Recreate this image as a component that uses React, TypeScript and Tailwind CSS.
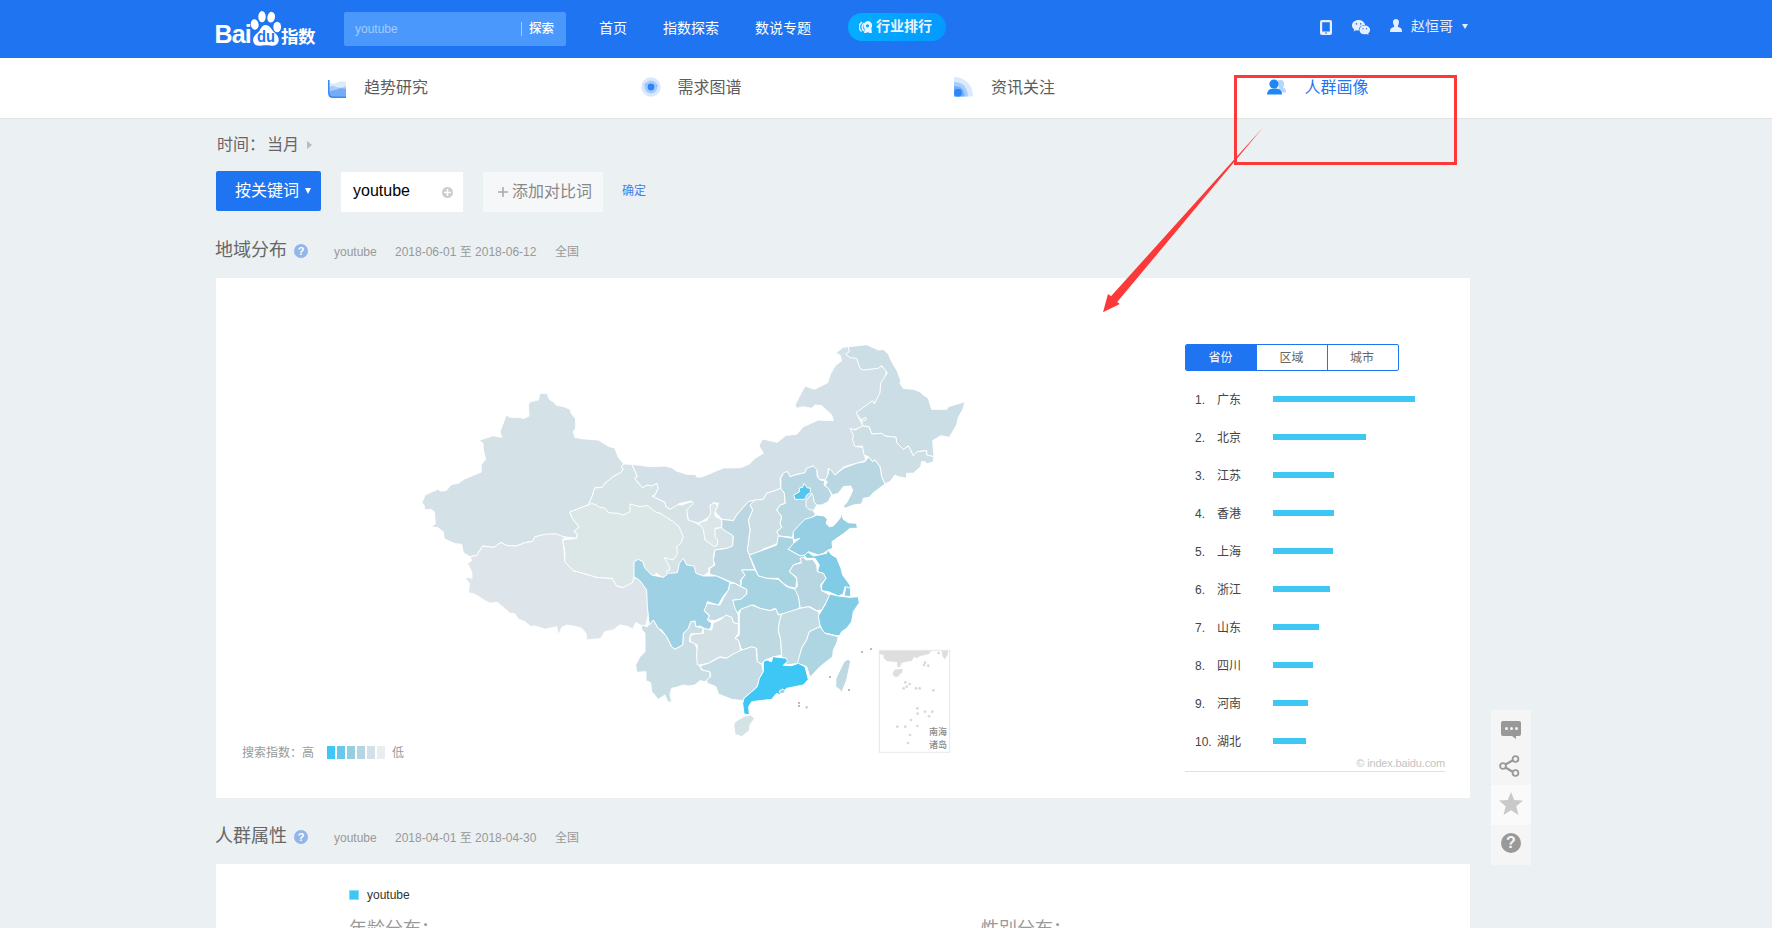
import React from "react";

type Shape = { d: string; fill: string };

const west: Shape[] = [
  { fill: "#d4e1e7", d: "M390,70 L413,70 414,80 420,90 430,95 440,106 462,110 480,118 485,132 497,147 497,175 490,185 495,202 515,206 565,210 598,230 614,234 625,262 642,282 633,290 640,297 632,308 612,318 585,340 577,352 554,354 547,378 535,405 479,426 487,445 507,471 492,485 502,492 500,505 458,500 430,492 375,500 368,514 345,518 320,528 288,526 273,517 252,532 218,528 200,556 180,560 160,548 155,523 135,521 103,507 100,486 85,474 62,470 76,462 73,425 62,418 44,419 42,405 36,398 45,375 85,357 90,363 108,362 125,343 145,340 163,327 214,306 213,285 227,268 220,240 219,220 207,211 250,197 275,202 270,185 289,135 300,142 330,142 340,146 357,138 355,103 362,95 385,90Z" },
  { fill: "#d6e3e6", d: "M642,282 L666,283 682,320 674,325 697,353 712,345 725,348 740,340 745,355 735,375 727,378 765,397 768,410 780,418 792,402 815,405 850,393 852,408 832,430 832,445 860,460 900,480 935,472 970,498 968,532 915,540 910,560 915,570 910,588 895,595 898,605 880,618 860,640 780,640 720,560 600,500 535,405 547,378 554,354 577,352 585,340 612,318 632,308 640,297 633,290Z" },
  { fill: "#dde5ea", d: "M180,560 L200,556 218,528 252,532 273,517 288,526 320,528 345,518 368,514 375,500 410,492 440,492 465,502 458,510 462,540 464,575 490,602 520,610 560,622 607,625 620,648 640,652 655,640 667,638 672,622 690,630 710,660 715,690 715,735 708,765 695,768 678,757 668,778 655,770 630,765 610,780 585,785 572,806 530,810 528,790 515,775 500,770 470,765 455,773 445,796 440,770 405,778 375,768 362,770 345,755 325,748 315,732 300,730 275,708 262,697 240,700 225,692 195,673 175,668 178,640 166,625 175,622 186,625 185,605 172,580 185,572Z" },
  { fill: "#dbe6e7", d: "M479,426 L535,405 545,400 558,405 565,410 585,415 595,428 625,430 640,435 660,425 660,402 690,410 712,407 735,425 750,430 790,455 807,470 820,500 812,520 800,530 803,550 790,570 762,563 775,582 780,600 770,603 772,618 755,622 740,610 730,618 712,610 700,590 697,575 680,570 672,580 680,598 672,622 667,638 640,652 620,648 607,625 560,622 520,610 490,602 464,575 465,545 458,510 500,505 502,492 492,485 507,471 487,445Z" },
];

const north: Shape[] = [
  { fill: "#d3e0e7", d: "M467,70 L488,52 505,50 530,60 620,120 605,190 580,225 530,250 550,290 520,300 530,350 550,352 557,392 530,400 510,405 490,412 465,435 445,415 442,445 435,450 415,448 412,425 400,408 380,415 375,428 345,435 330,442 322,425 310,430 300,445 302,475 285,482 260,490 250,508 230,512 205,515 170,555 160,572 125,568 105,545 115,520 100,518 90,560 55,580 25,570 20,540 40,520 35,513 0,520 -30,538 -42,530 -45,517 -60,510 -83,498 -75,495 -65,475 -70,460 -85,468 -98,465 -113,473 -136,445 -128,440 -144,403 -90,410 -45,408 -25,413 -10,423 20,433 47,433 50,441 65,441 130,414 182,413 208,402 225,385 250,370 237,347 248,327 292,337 318,316 350,313 370,290 415,270 460,272 455,255 425,227 405,225 395,235 370,230 350,235 345,225 358,200 375,168 403,178 443,158 450,135 465,108 485,92 480,75Z" },
  { fill: "#ccdee5", d: "M505,50 L560,44 595,60 610,58 625,72 635,95 650,120 662,150 660,160 670,175 700,178 720,185 730,195 745,205 755,238 800,238 805,230 855,215 848,240 835,262 830,285 808,322 782,317 758,332 762,380 740,375 740,362 712,365 700,377 685,348 670,358 650,338 648,322 615,318 605,310 575,312 567,290 548,288 545,272 528,248 578,212 583,222 600,188 602,160 622,128 605,107 595,115 550,120 540,115 530,85 510,83 497,73 508,65Z" },
  { fill: "#d3e0e7", d: "M545,268 L557,262 559,268 550,274Z" },
  { fill: "#cddfe4", d: "M510,295 L525,300 548,288 567,290 575,312 605,310 615,318 648,322 650,338 670,358 685,348 700,377 712,365 740,362 740,375 762,380 760,395 740,402 735,395 725,395 722,410 700,430 680,430 680,445 655,440 645,435 630,455 615,462 605,440 600,410 585,390 578,395 565,380 552,375 547,348 525,350 518,330 520,315Z" },
  { fill: "#b8d7e3", d: "M565,382 L578,395 585,390 600,410 605,440 615,462 578,490 568,502 550,505 545,522 520,525 495,535 490,528 500,518 512,495 518,480 512,468 490,470 475,490 457,495 445,475 435,467 442,455 435,452 445,430 445,415 455,422 465,435 490,415 510,407 530,400 555,395Z" },
  { fill: "#b8d7e3", d: "M318,425 L325,428 330,440 345,435 375,428 380,415 400,408 410,418 412,440 420,450 435,452 432,465 445,475 455,495 445,515 425,525 410,525 400,545 407,552 398,562 370,580 355,590 340,610 338,622 295,618 290,605 305,592 300,580 305,560 290,540 300,525 315,520 313,490 302,475 303,455 302,445 310,430Z" },
  { fill: "#c5dce4", d: "M378,512 L388,500 395,490 400,500 402,515 410,525 403,540 390,540 378,530Z" },
  { fill: "#54c6ee", d: "M372,460 L382,474 391,474 391,488 380,495 375,508 345,508 341,495 358,486 358,474 368,472Z" },
  { fill: "#cddfe4", d: "M302,475 L313,490 315,520 300,525 290,540 305,560 300,580 305,592 290,605 297,618 292,640 270,650 255,655 232,668 205,675 202,660 210,600 205,570 218,540 210,525 225,510 250,508 260,490 285,482Z" },
  { fill: "#bad7e1", d: "M225,510 L210,525 218,540 205,570 210,600 202,660 208,675 215,695 225,720 185,720 195,735 182,750 183,770 165,760 150,755 120,742 88,732 90,715 105,705 100,690 105,660 140,655 158,648 160,618 125,595 125,568 160,572 170,555 205,515Z" },
];

const south: Shape[] = [
  { fill: "#dbe6e9", d: "M285,38 L293,50 285,65 285,78 305,90 305,112 285,115 285,140 293,150 292,165 282,170 270,160 255,150 250,118 235,98 260,92 272,70 270,45Z" },
  { fill: "#a8d4e2", d: "M475,138 L520,145 522,160 505,178 540,197 555,195 548,215 520,225 508,245 530,265 528,295 505,290 490,280 475,265 440,265 415,258 388,195 430,180 470,165Z" },
  { fill: "#80cbe5", d: "M548,190 L565,187 580,198 620,190 622,178 635,195 650,203 663,235 668,255 690,285 692,298 675,290 670,312 655,318 625,305 605,302 605,285 618,265 610,250 592,245 598,225 585,205 560,205Z" },
  { fill: "#96cee3", d: "M520,125 L535,108 555,88 580,80 590,75 612,78 622,88 618,100 628,110 640,108 660,85 665,72 670,88 685,98 710,100 712,115 690,115 672,130 650,145 636,155 638,175 625,180 610,190 595,195 565,185 555,195 540,197 505,178 520,160 540,145 520,150Z" },
  { fill: "#8acde3", d: "M678,290 L692,295 692,320 672,318Z" },
  { fill: "#b8d6e1", d: "M548,202 L560,210 578,208 590,225 592,245 610,250 618,265 602,285 605,302 630,315 620,335 605,360 590,362 570,350 540,355 535,320 520,300 532,290 530,262 508,245 520,225 545,218 540,205Z" },
  { fill: "#a6d4e2", d: "M365,240 L405,240 415,258 440,265 475,268 500,290 525,298 535,320 540,352 520,365 490,375 475,372 465,355 450,362 420,355 400,345 360,360 350,372 340,350 338,330 362,328 380,312 380,298 362,290 365,268 375,255Z" },
  { fill: "#c3dbe4", d: "M330,280 L345,280 362,290 380,298 380,312 362,328 338,330 345,355 355,375 355,402 340,398 335,382 320,378 300,385 285,392 262,390 268,375 252,362 262,340 300,345 310,325 325,300Z" },
  { fill: "#c8dde4", d: "M88,400 L100,390 115,415 140,440 155,470 165,477 188,465 190,430 205,415 212,395 225,393 228,410 250,415 245,430 212,432 208,455 225,460 232,480 230,500 235,520 245,540 270,545 270,565 255,575 240,572 225,585 205,588 190,585 170,592 155,595 150,612 155,637 143,635 135,615 115,628 95,605 92,578 78,572 78,545 50,547 47,525 60,500 75,485 75,430 65,418 65,405 82,410Z" },
  { fill: "#9fd1e4", d: "M42,215 L55,208 68,215 75,235 95,255 130,262 145,250 172,248 178,220 190,205 200,225 222,228 228,250 250,258 290,258 315,270 330,277 325,300 310,318 295,345 262,335 258,350 252,362 268,378 262,390 275,400 272,415 262,420 240,408 228,410 225,393 212,395 205,415 190,430 188,465 165,477 155,470 140,440 125,420 115,415 100,390 88,405 82,350 80,300 60,272 42,260Z" },
  { fill: "#d3e0e6", d: "M210,438 L222,432 250,430 250,415 275,420 280,398 300,390 318,375 335,382 340,398 355,402 355,430 345,445 358,450 362,485 340,492 320,505 300,500 285,508 265,520 240,525 232,525 230,500 232,465 212,455Z" },
  { fill: "#c2dbe4", d: "M265,520 L300,502 320,505 340,492 365,480 395,470 408,472 412,515 425,522 430,545 418,565 412,590 395,605 372,625 370,632 335,628 295,612 288,590 262,580 260,570 272,560 270,545 248,540 240,528Z" },
  { fill: "#bfd9e3", d: "M358,375 L362,358 395,345 420,355 450,362 468,357 475,375 485,372 478,400 475,420 482,450 485,495 465,500 435,510 425,522 412,515 410,475 395,470 365,480 355,450 345,445 358,435Z" },
  { fill: "#c2dbe4", d: "M485,372 L540,355 565,350 595,365 602,390 600,410 568,425 560,450 545,475 535,520 500,525 485,498 482,450 475,420 478,395Z" },
  { fill: "#83cce6", d: "M630,312 L655,318 690,322 715,320 718,338 700,365 695,395 680,415 665,425 658,438 640,435 610,428 600,405 595,378 615,345Z" },
  { fill: "#add5e2", d: "M600,410 L615,430 655,440 650,460 640,480 638,500 600,530 570,562 560,530 532,520 545,475 560,450 568,425Z" },
  { fill: "#3ec6f5", d: "M430,515 L440,510 455,515 458,500 500,505 502,514 490,526 515,527 535,520 555,530 565,568 550,585 500,595 490,605 480,615 470,610 455,628 395,635 386,650 388,675 372,672 368,640 372,625 395,605 412,590 418,565 430,545Z" },
  { fill: "#9fd1e4", d: "M478,603 L488,597 496,602 490,611 480,610Z" },
  { fill: "#d6e3e6", d: "M345,695 L375,678 392,675 404,685 390,705 388,722 365,740 345,733 341,705Z" },
  { fill: "#bfd9e3", d: "M672,515 L685,507 692,515 680,570 665,608 660,600 647,590 648,565Z" },
];

const islets = [[726, 486], [753, 477], [630, 561], [687, 600], [537, 639], [537, 648], [560, 652]];
const reefs = [
  [266, 159], [225, 188], [222, 195], [235, 197], [166, 247], [179, 252], [170, 260], [161, 265], [198, 265],
  [209, 265], [250, 271], [202, 325], [203, 341], [225, 335], [247, 335], [237, 349], [183, 360], [142, 380],
  [166, 380], [202, 378], [180, 405], [174, 429],
];

function Region({ shapes }: { shapes: Shape[] }) {
  return (
    <>
      {shapes.map((s, i) => (
        <path key={i} d={s.d} fill={s.fill} stroke="#fff" strokeWidth="3" strokeLinejoin="round" />
      ))}
    </>
  );
}

function ChinaMap() {
  return (
    <svg width="580" height="430" viewBox="410 330 580 430" className="block">
      <g transform="translate(410 370) scale(.33333)"><Region shapes={west} /></g>
      <g transform="translate(680 330) scale(.33333)"><Region shapes={north} /></g>
      <g transform="translate(620 490) scale(.33333)">
        <Region shapes={south} />
        {islets.map(([x, y], i) => <rect key={i} x={x - 3} y={y - 3} width="6" height="6" fill="#bbb" />)}
      </g>
      <g transform="translate(850 600) scale(.33333)">
        <rect x="88" y="151" width="211" height="306" fill="#fff" stroke="#e8e8e8" strokeWidth="3" />
        <path d="M89,152 H245 L235,163 210,168 200,175 193,170 185,182 155,188 150,202 142,200 141,186 112,184 101,175 101,165 89,162Z M275,152 H295 L293,165 284,178 277,168Z M128,220 L133,209 158,206 157,216 142,231 131,229Z" fill="#dedede" />
        {reefs.map(([x, y], i) => <circle key={i} cx={x} cy={y} r="4" fill="#d8d8d8" />)}
        <text x="237" y="406" fontSize="27" fontWeight="500" fill="#8a8a8a">南海</text>
        <text x="237" y="445" fontSize="27" fontWeight="500" fill="#8a8a8a">诸岛</text>
      </g>
    </svg>
  );
}

function Paw() {
  return (
    <svg width="32" height="36" viewBox="0 0 32 36" className="block">
      <g fill="#fff">
        <ellipse cx="4.700" cy="13.500" rx="3.900" ry="5.300" transform="rotate(-8 4.700 13.500)" />
        <ellipse cx="12" cy="5.700" rx="3.700" ry="5.600" />
        <ellipse cx="21.200" cy="6.200" rx="3.800" ry="5.400" transform="rotate(10 21.200 6.200)" />
        <ellipse cx="27.200" cy="16" rx="3.900" ry="5.200" />
        <path d="M15.500 14c4.500 0 5.500 4 8.500 7 3 2.500 5.500 5.500 4.500 9.500-1.200 4.200-5 4.500-8.500 4-3-.5-5-.5-8 0-4 .6-8 .2-8.800-4.500-.6-4 2-6 4.800-8.500 2.700-2.600 3.500-7.500 7.500-7.500Z" />
      </g>
      <text x="7" y="31" fontSize="16" fontFamily="Liberation Sans" fill="#1f74f2" textLength="18" lengthAdjust="spacingAndGlyphs" fontWeight="700">du</text>
    </svg>
  );
}

const ranking = [
  ["广东", 142], ["北京", 93], ["江苏", 61], ["香港", 61], ["上海", 60],
  ["浙江", 57], ["山东", 46], ["四川", 40], ["河南", 35], ["湖北", 33],
] as const;

function TrendIcon() {
  return (
    <svg width="18" height="18" viewBox="0 0 18 18" className="ml-px mt-px">
      <path d="M1 2Q4 5 8 3Q13 0 18 2V17H1Z" fill="#dcebfc" />
      <path d="M1 8Q4 4 8 7Q13 9 18 6V17H1Z" fill="#a9cdfa" />
      <path d="M1 12Q4 10 8 10Q12 7 18 9V17H1Z" fill="#74acf7" />
      <path d="M.8 0V13Q.8 17.200 5 17.200H18" fill="none" stroke="#3d8af3" strokeWidth="1.600" />
    </svg>
  );
}
function DemandIcon() {
  return (
    <svg width="20" height="20" viewBox="0 0 20 20" className="-mt-[3px]">
      <circle cx="10" cy="10" r="9.700" fill="#d7e7fd" />
      <circle cx="10" cy="10" r="6.500" fill="#a6cbfa" />
      <circle cx="4.500" cy="7.500" r="1" fill="#8abaf8" /><circle cx="15.500" cy="8.500" r="1" fill="#8abaf8" />
      <circle cx="10" cy="10" r="3.400" fill="#2d84f6" />
    </svg>
  );
}
function NewsIcon() {
  return (
    <svg width="20" height="20" viewBox="0 0 20 20" className="-mt-[3px]">
      <path d="M0 0C11 0 19 8 19 19.500H0Z" fill="#dbe9fd" />
      <path d="M0 5C9 5 14 11 14 19.500H0Z" fill="#a9cdfb" />
      <path d="M0 9C7 9 11 13 10.500 19.500H0Z" fill="#73aefa" />
      <circle cx="4" cy="15.700" r="3.900" fill="#2d88f7" />
    </svg>
  );
}
function CrowdIcon() {
  return (
    <svg width="20" height="17" viewBox="0 0 20 17" className="-ml-px -mt-0.5">
      <path d="M11 1.500C16-.5 19 4 16 8.500c2 .5 3 2 3 5h-7Z" fill="#b5d7fb" />
      <circle cx="7" cy="5" r="4.600" fill="#1f86f7" />
      <path d="M0 15.500C0 11 3 9.500 7.500 9.500s7.500 1.500 7.500 6Z" fill="#1f86f7" />
    </svg>
  );
}

function SectionTitle({ title, range }: { title: string; range: string }) {
  return (
    <div className="flex h-10 items-center">
      <h2 className="-ml-px w-[79px] text-[18px] text-[#666]">{title}</h2>
      <span className="mt-0.5 flex size-3.5 items-center justify-center rounded-full bg-[#93b5e8] text-[11px] leading-none font-bold text-white">?</span>
      <div className="mt-1 ml-[26px] flex text-xs text-[#999]">
        <span className="w-[61px]">youtube</span>
        <span className="w-[160px]">{range}</span>
        <span>全国</span>
      </div>
    </div>
  );
}

function Header() {
  return (
    <header className="h-[58px] bg-[#1f74f2] text-white">
      <div className="mx-auto flex h-full w-[1340px] items-start">
        <div className="flex h-[58px] w-[128px] pt-[11px]">
          <span className="mt-[5px] -ml-[1.500px] w-[35.500px] text-[25px] leading-[36px] font-bold tracking-[-0.800px]">Bai</span>
          <Paw />
          <span className="mt-[9px] -ml-px text-[17.500px] leading-[34px] font-bold tracking-[-0.500px] whitespace-nowrap">指数</span>
        </div>
        <div className="mt-3 flex h-[34px] w-[222px] items-center rounded-[2px] bg-[#4a98fb] pl-[11px] text-xs">
          <span className="w-[166px] text-[#a5cbfd]">youtube</span>
          <span className="h-[14px] w-px bg-[#a5cbfd]" />
          <span className="ml-[7px] text-[12.500px] font-medium">探索</span>
        </div>
        <nav className="ml-[34px] flex h-[56px] items-center text-sm">
          <span className="-ml-px w-[64px]">首页</span>
          <span className="w-[92px]">指数探索</span>
          <span className="w-[93px]">数说专题</span>
        </nav>
        <div className="mt-[13px] flex h-7 w-[98px] items-center rounded-full bg-linear-to-r from-[#05adff] to-[#0599ff] pl-[11px]">
          <svg width="14" height="13" viewBox="0 0 14 13">
            <path d="M3 1C-1 4 0 8 2.500 10.500M5 2C2 4.500 3 8 5 10" fill="none" stroke="#e8f5ff" strokeWidth="1.500" />
            <path d="M8.500 0a4.500 4.500 0 0 1 3.800 7l.7 5H10l-1-1-2 1H5l.8-4A4.700 4.700 0 0 1 8.500 0Z" fill="#e8f5ff" />
            <circle cx="8.500" cy="4.800" r="1.600" fill="#05a6ff" />
          </svg>
          <span className="ml-[3px] -mt-0.5 text-[14px] font-bold text-[#e8f5ff]">行业排行</span>
        </div>
        <div className="ml-[374px] flex h-[53px] items-center text-[#e6effd]">
          <svg width="12" height="15" viewBox="0 0 12 15" className="mt-px">
            <path fillRule="evenodd" fill="currentColor" d="M2 0H10Q12 0 12 2V13Q12 15 10 15H2Q0 15 0 13V2Q0 0 2 0ZM2.200 2.300V11.500H9.800V2.300ZM5 12.500V13.500H7V12.500Z" />
          </svg>
          <svg width="19" height="15" viewBox="0 0 19 15" className="mt-px ml-[20px]">
            <path fill="currentColor" d="M6.500 0C3 0 0 2.300 0 5.400c0 1.700 1 3 2.300 4l-.6 2 2.300-1.200c.9.300 1.800.4 2.800.4C6.500 7 9.500 4.700 13 4.900 12.500 2 9.700 0 6.500 0Z" />
            <path fill="currentColor" d="M12.700 5.500c-3 0-5.200 2-5.200 4.400 0 2.500 2.300 4.400 5.200 4.400.7 0 1.300-.1 2-.3l1.900 1-.5-1.700c1.100-.8 2-2 2-3.400 0-2.400-2.400-4.400-5.400-4.400Z" />
            <g fill="#1f74f2"><circle cx="4.500" cy="3.900" r=".8" /><circle cx="8.700" cy="3.900" r=".8" /><circle cx="11" cy="8.700" r=".7" /><circle cx="14.500" cy="8.700" r=".7" /></g>
          </svg>
          <svg width="12" height="13" viewBox="0 0 12 13" className="-mt-0.5 ml-[19px]">
            <path fill="currentColor" d="M6 0C9 0 9.600 3 8.500 5.500Q7.500 7 8 8C10.500 8.500 12 9 12 13H0C0 9 2 8.500 4 8Q4.500 7 3.500 5.500C2.400 3 3 0 6 0Z" />
          </svg>
          <span className="-mt-0.5 ml-[9px] w-[51px] text-sm whitespace-nowrap">赵恒哥</span>
          <svg width="6" height="5" viewBox="0 0 6 5"><path d="M0 0H6L3 5Z" fill="currentColor" /></svg>
        </div>
      </div>
    </header>
  );
}

function SideTools() {
  return (
    <aside className="absolute top-[710px] left-[1491px] flex w-10 flex-col bg-[#f5f5f5]">
      <div className="flex h-[36px] items-end justify-center">
        <svg width="20" height="18" viewBox="0 0 20 18" className="mb-[7px]">
          <path d="M2 0H18Q20 0 20 2V13Q20 15 18 15H15V18L11 15H2Q0 15 0 13V2Q0 0 2 0Z" fill="#999" />
          <g fill="#f5f5f5"><circle cx="5.500" cy="7.500" r="1.500" /><circle cx="10.500" cy="7.500" r="1.500" /><circle cx="15.500" cy="7.500" r="1.500" /></g>
        </svg>
      </div>
      <div className="flex h-[39px] items-center justify-center">
        <svg width="22" height="22" viewBox="0 0 22 22" fill="none" stroke="#999" strokeWidth="1.800" className="-ml-0.5">
          <path d="M6.500 9.500L13.500 5.500M6.500 12.500L13.500 16.800" strokeWidth="2.200" />
          <circle cx="4" cy="11" r="2.900" /><circle cx="16.500" cy="4" r="2.900" /><circle cx="16.500" cy="18" r="2.900" />
        </svg>
      </div>
      <div className="flex h-10 items-center justify-center bg-[#fafafa]">
        <svg width="24" height="23" viewBox="0 0 24 23" className="-mt-[3px] -ml-px">
          <path d="M12 0L15.200 8 24 8.600 17.300 14.200 19.500 23 12 18.300 4.500 23 6.700 14.200 0 8.600 8.800 8Z" fill="#c9c9c9" />
        </svg>
      </div>
      <div className="flex h-10 items-center justify-center">
        <span className="-mt-1 flex size-5 items-center justify-center rounded-full bg-[#999] text-[16px] leading-none font-bold text-[#f5f5f5]">?</span>
      </div>
    </aside>
  );
}

const tabs = [
  { label: "趋势研究", icon: <TrendIcon /> },
  { label: "需求图谱", icon: <DemandIcon /> },
  { label: "资讯关注", icon: <NewsIcon /> },
  { label: "人群画像", icon: <CrowdIcon />, active: true },
];

export default function App() {
  return (
    <div className="relative h-[928px] w-[1772px] overflow-hidden bg-[#ebf0f3] font-['Liberation_Sans','Noto_Sans_CJK_SC',sans-serif]">
      <Header />
      <div className="h-[61px] border-b border-[#dfe4e3] bg-white">
        <div className="mr-auto ml-[216px] grid h-full w-[1254px] grid-cols-4">
          {tabs.map((t) => (
            <div key={t.label} className="flex items-center pl-[111px]">
              <span className="flex w-[37px]">{t.icon}</span>
              <span className={t.active ? "text-[16px] text-[#1f74f2]" : "text-[16px] text-[#5c5c5c]"}>{t.label}</span>
            </div>
          ))}
        </div>
      </div>

      <main className="ml-[216px] w-[1254px]">
        <div className="flex h-[52px] items-center pl-px text-[16px] text-[#666]">
          <span className="w-[50px] whitespace-nowrap">时间：</span>
          <span className="w-[40px]">当月</span>
          <svg width="5" height="8" viewBox="0 0 5 8"><path d="M0 0L5 4L0 8Z" fill="#bbb" /></svg>
        </div>
        <div className="flex h-[41px] items-end">
          <div className="mb-px flex h-10 w-[105px] items-center rounded-[2px] bg-[#1f74f2] pl-[19px] text-[16px] text-white">
            <span className="w-[70px]">按关键词</span>
            <svg width="6" height="6" viewBox="0 0 6 6" className="-mt-px"><path d="M0 0H6L3 6Z" fill="#fff" /></svg>
          </div>
          <div className="ml-5 flex h-10 w-[122px] items-center bg-white pl-3 text-[16px] text-black">
            <span className="-mt-0.5 w-[89px]">youtube</span>
            <svg width="11" height="11" viewBox="0 0 11 11"><circle cx="5.500" cy="5.500" r="5.500" fill="#ccc" /><path d="M5.500 2V9M2 5.500H9" stroke="#fff" strokeWidth="1.500" /></svg>
          </div>
          <div className="ml-5 flex h-10 w-[120px] items-center bg-[#f5f7f9] pl-[15px] text-[16px] text-[#888]">
            <svg width="10" height="10" viewBox="0 0 10 10"><path d="M5 0V10M0 5H10" stroke="#aaa" strokeWidth="1.600" /></svg>
            <span className="ml-1">添加对比词</span>
          </div>
          <span className="ml-[19px] flex h-[42px] items-center text-xs text-[#3d7ff0]">确定</span>
        </div>

        <div className="mt-[18px]"><SectionTitle title="地域分布" range="2018-06-01 至 2018-06-12" /></div>
        <section className="mt-2 flex h-[520px] bg-white">
          <div className="w-[969px] pt-[52px]">
            <div className="pl-[194px]"><ChinaMap /></div>
            <div className="-mt-[17px] flex h-[18px] items-center pl-[26px] text-xs text-[#999]">
              <span className="mt-0.5 w-[85px]">搜索指数：高</span>
              <div className="flex gap-0.5">
                <i className="h-[13px] w-2 bg-[#3ec6f5]" />
                <i className="h-[13px] w-2 bg-[#68c8ea]" />
                <i className="h-[13px] w-2 bg-[#95cde1]" />
                <i className="h-[13px] w-2 bg-[#b4d5e1]" />
                <i className="h-[13px] w-2 bg-[#d3e0e7]" />
                <i className="h-[13px] w-2 bg-[#e9edef]" />
              </div>
              <span className="mt-0.5 ml-[7px]">低</span>
            </div>
          </div>
          <div className="w-[260px] pt-[66px]">
            <div className="flex h-[27px] w-[214px] overflow-hidden rounded-[2px] border border-[#1f74f2] text-xs leading-[27px] text-[#666]">
              <span className="w-[71px] bg-[#1f74f2] pr-0.5 text-center text-white">省份</span>
              <span className="w-[71px] border-r border-[#1f74f2] pr-px text-center">区域</span>
              <span className="flex-1 pr-0.5 text-center">城市</span>
            </div>
            <ol className="mt-[9px] h-[380px] text-xs text-[#444]">
              {ranking.map(([name, w], i) => (
                <li key={name} className="flex h-[38px] items-center pl-2.5">
                  <span className="mt-0.5 w-[22px]">{i + 1}.</span>
                  <span className="mt-0.5 w-[56px]">{name}</span>
                  <i className="-mt-px block h-1.5 bg-[#3ec6f5]" style={{ width: w }} />
                </li>
              ))}
            </ol>
            <div className="-mt-[7px] h-[19px] border-b border-[#e0e0e0] text-right text-[11px] leading-[20px] tracking-[-0.150px] text-[#c4c4c4]">
              © index.baidu.com
            </div>
          </div>
        </section>

        <div className="mt-[18px]"><SectionTitle title="人群属性" range="2018-04-01 至 2018-04-30" /></div>
        <section className="mt-2 h-[300px] bg-white px-[133px] pt-[22px]">
          <div className="flex h-[18px] items-center text-xs text-[#333]">
            <i className="mr-2 size-2.5 border border-[#8bdcf8] bg-[#3ec6f5]" />
            youtube
          </div>
          <div className="mt-3 flex text-[18px] leading-[27px] text-[#999]">
            <span className="w-[632px]">年龄分布：</span>
            <span>性别分布：</span>
          </div>
        </section>
      </main>

      <SideTools />

      <div className="absolute top-[75px] left-[1234px] h-[90px] w-[223px] border-3 border-[#fd3838]" />
      <svg width="170" height="190" viewBox="1100 125 170 190" className="absolute top-[125px] left-[1100px]">
        <path d="M1263 127.500L1117.200 302 1119.800 304 1103 312.300 1108 294 1111 296.300Z" fill="#fd3838" />
      </svg>
    </div>
  );
}
